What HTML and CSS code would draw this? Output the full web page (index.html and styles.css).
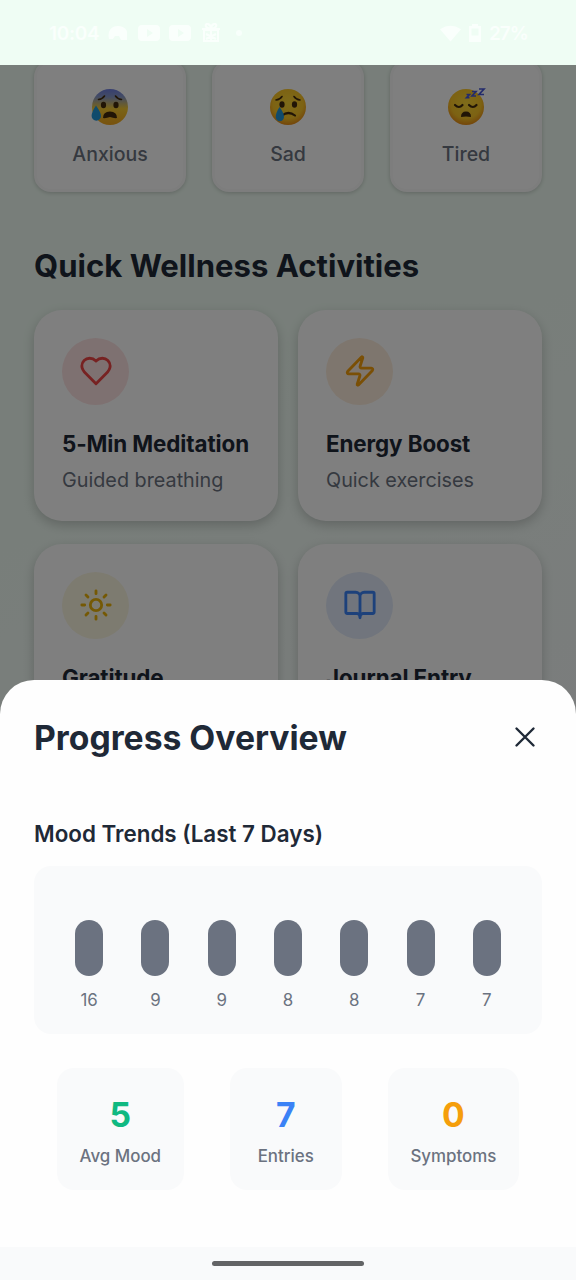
FILE: index.html
```html
<!DOCTYPE html>
<html lang="en">
<head>
    <meta charset="UTF-8">
    <meta name="viewport" content="width=device-width, initial-scale=1.0">
    <title>Wellness</title>
    <link rel="stylesheet" href="styles.css">
</head>
<body>

<div class="screen">
    <header class="status-bar">
        <div class="status-left">
            <span class="clock">10:04</span>
            <svg class="status-icon" viewBox="0 0 22 16"><path d="M2 14C0 5 5 1 11 1s10 4 9 8v6h-6l-2-4H8l-2 3z"/></svg>
            <svg class="status-icon" viewBox="0 0 22 16"><path fill-rule="evenodd" d="M4 0h14q4 0 4 4v8q0 4-4 4H4q-4 0-4-4V4q0-4 4-4zm5 4v8l6-4z"/></svg>
            <svg class="status-icon" viewBox="0 0 22 16"><path fill-rule="evenodd" d="M4 0h14q4 0 4 4v8q0 4-4 4H4q-4 0-4-4V4q0-4 4-4zm5 4v8l6-4z"/></svg>
            <svg class="status-icon gift" viewBox="0 0 20 20"><path d="M3 7h14v11H3zM1 6h18M10 6v12M10 6C3 5 4 0 7 1s3 5 3 5 0-4 3-5 4 4-3 5M5 11l10 5M15 11l-10 5"/></svg>
            <span class="status-dot"></span>
        </div>
        <div class="status-right">
            <svg class="wifi" viewBox="0 0 22 17"><path d="M0 4Q11-3 22 4L11 17z"/></svg>
            <svg class="battery" viewBox="0 0 12 18"><path fill-rule="evenodd" d="M3 2V0h6v2h3v16H0V2zM2.500 4.500v7h7v-7z"/></svg>
            <span class="percent">27%</span>
        </div>
    </header>

    <main class="page">
        <div class="moods">
            <div class="mood">
                <svg class="emoji" viewBox="0 0 40 40">
                    <defs>
                        <linearGradient id="face-cold" x1="0" y1="0" x2="0" y2="1">
                            <stop offset="0" stop-color="#6d7de0"/>
                            <stop offset=".22" stop-color="#8798c8"/>
                            <stop offset=".55" stop-color="#f5c92f"/>
                            <stop offset="1" stop-color="#f0a51e"/>
                        </linearGradient>
                        <radialGradient id="face-warm" cx=".5" cy=".4" r=".6">
                            <stop offset="0" stop-color="#fdd835"/>
                            <stop offset=".7" stop-color="#fac526"/>
                            <stop offset="1" stop-color="#e88d16"/>
                        </radialGradient>
                    </defs>
                    <circle cx="20" cy="20" r="18" fill="url(#face-cold)"/>
                    <path d="M8.500 12.500q4-.5 6-3.500M31.500 12.500q-4-.5-6-3.500" class="brow"/>
                    <ellipse cx="13.500" cy="18" rx="2.600" ry="3.200" class="dark"/>
                    <ellipse cx="26" cy="18" rx="2.600" ry="3.200" class="dark"/>
                    <path d="M13 31q0-6.500 7-6.500t7 6.500q-3 .5-7-1-4 1.500-7 1z" class="dark"/>
                    <path d="M6 18.500q5 7 5 10.500a4.700 4.700 0 0 1-9.400 0q0-4 4.400-10.500z" class="tear"/>
                </svg>
                <span>Anxious</span>
            </div>
            <div class="mood">
                <svg class="emoji" viewBox="0 0 40 40">
                    <circle cx="20" cy="20" r="18" fill="url(#face-warm)"/>
                    <path d="M8 13q4-.5 6-3.500M32 13q-4-.5-6-3.500" class="brow"/>
                    <ellipse cx="14" cy="17.500" rx="2.600" ry="3.300" class="dark"/>
                    <ellipse cx="26.500" cy="17.500" rx="2.600" ry="3.300" class="dark"/>
                    <path d="M14 28.500q6.500-5 13 0" class="mouth"/>
                    <path d="M11.500 20q4.500 6 4.500 10a4 4 0 0 1-8.300 0q0-4 3.800-10z" class="tear"/>
                </svg>
                <span>Sad</span>
            </div>
            <div class="mood">
                <svg class="emoji" viewBox="0 0 40 40">
                    <circle cx="20" cy="20" r="18" fill="url(#face-warm)"/>
                    <path d="M9 18q4 4 7.500 0M23 18q4 4 7.500 0" class="lid"/>
                    <path d="M15 30q0-5.500 5-5.500t5 5.500q-5-1.200-10 0z" class="dark"/>
                    <path d="M20.500 7.500h3l-3 3.200h3M26 4.500h4l-4 4.500h4M33 2h5l-5 5.500h5" class="snore"/>
                </svg>
                <span>Tired</span>
            </div>
        </div>

        <h2 class="section-title">Quick Wellness Activities</h2>

        <div class="activities">
            <div class="activity">
                <div class="badge red">
                    <svg viewBox="0 0 24 24"><path d="M19 14c1.490-1.460 3-3.210 3-5.500A5.500 5.500 0 0 0 16.500 3c-1.760 0-3 .5-4.500 2-1.500-1.500-2.740-2-4.500-2A5.500 5.500 0 0 0 2 8.500c0 2.300 1.500 4.050 3 5.500l7 7Z"/></svg>
                </div>
                <h3>5-Min Meditation</h3>
                <p>Guided breathing</p>
            </div>
            <div class="activity">
                <div class="badge orange">
                    <svg viewBox="0 0 24 24"><path d="M4 14a1 1 0 0 1-.78-1.630l9.900-10.200a.5.5 0 0 1 .86.460l-1.920 6.020A1 1 0 0 0 13 10h7a1 1 0 0 1 .78 1.630l-9.900 10.200a.5.5 0 0 1-.86-.460l1.920-6.020A1 1 0 0 0 11 14z"/></svg>
                </div>
                <h3>Energy Boost</h3>
                <p>Quick exercises</p>
            </div>
            <div class="activity">
                <div class="badge yellow">
                    <svg viewBox="0 0 24 24"><circle cx="12" cy="12" r="4"/><path d="M12 2v2M12 20v2M4.930 4.930l1.410 1.410M17.660 17.660l1.410 1.410M2 12h2M20 12h2M6.340 17.660l-1.410 1.410M19.070 4.930l-1.410 1.410"/></svg>
                </div>
                <h3>Gratitude</h3>
            </div>
            <div class="activity">
                <div class="badge blue">
                    <svg viewBox="0 0 24 24"><path d="M12 6v15M3 18a1 1 0 0 1-1-1V4a1 1 0 0 1 1-1h6a3 3 0 0 1 3 3 3 3 0 0 1 3-3h6a1 1 0 0 1 1 1v13a1 1 0 0 1-1 1h-7a2 3 0 0 0-2 3 2 3 0 0 0-2-3z"/></svg>
                </div>
                <h3>Journal Entry</h3>
            </div>
        </div>
    </main>

    <div class="overlay">
        <section class="sheet">
            <div class="sheet-header">
                <h1>Progress Overview</h1>
                <button class="close" aria-label="Close">
                    <svg viewBox="0 0 24 24"><path d="M18 6 6 18M6 6l12 12"/></svg>
                </button>
            </div>

            <h4 class="chart-title">Mood Trends (Last 7 Days)</h4>
            <div class="chart">
                <div class="day"><div class="bar"></div><span>16</span></div>
                <div class="day"><div class="bar"></div><span>9</span></div>
                <div class="day"><div class="bar"></div><span>9</span></div>
                <div class="day"><div class="bar"></div><span>8</span></div>
                <div class="day"><div class="bar"></div><span>8</span></div>
                <div class="day"><div class="bar"></div><span>7</span></div>
                <div class="day"><div class="bar"></div><span>7</span></div>
            </div>

            <div class="stats">
                <div class="stat"><strong class="green-text">5</strong><span>Avg Mood</span></div>
                <div class="stat"><strong class="blue-text">7</strong><span>Entries</span></div>
                <div class="stat"><strong class="orange-text">0</strong><span>Symptoms</span></div>
            </div>
        </section>
        <div class="nav-bar"><div class="nav-handle"></div></div>
    </div>
</div>

</body>
</html>
```
FILE: styles.css
```css
* {
    box-sizing: border-box;
}
body {
    margin: 0;
    font-family: Inter, sans-serif;
    color: #1f2937;
}
h1, h2, h3, h4, p {
    margin: 0;
}
.screen {
    position: relative;
    display: flex;
    flex-direction: column;
    width: 576px;
    height: 1280px;
    overflow: hidden;
    background: linear-gradient(155deg, #f0fdf4 30%, #f8fafc 75%);
}

/* status bar */
.status-bar {
    display: flex;
    flex: none;
    justify-content: space-between;
    align-items: center;
    height: 65px;
    padding: 1px 49px 0;
    background-color: #effdf4;
    color: #fafffc;
    fill: #fafffc;
    font-size: 19px;
    font-weight: 600;
}
.status-left,
.status-right {
    display: flex;
    align-items: center;
}
.status-left {
    gap: 9px;
}
.clock {
    width: 49px;
    letter-spacing: -0.3px;
}
.status-right {
    gap: 8px;
}
.percent {
    width: 38px;
    letter-spacing: -1px;
}
.status-icon {
    width: 22px;
    height: 16px;
}
.gift {
    height: 20px;
    fill: none;
    stroke: #fafffc;
    stroke-width: 2;
}
.status-dot {
    width: 6px;
    height: 6px;
    margin-left: 5px;
    border-radius: 50%;
    background-color: #f8fffb;
}
.wifi {
    width: 21px;
    height: 17px;
}
.battery {
    width: 12px;
    height: 18px;
}

/* page behind the sheet */
.page {
    flex: 1;
    min-height: 0;
    padding: 0 34px;
    overflow: hidden;
}
.moods {
    display: flex;
    justify-content: space-between;
    margin-top: -5px;
}
.mood {
    display: flex;
    flex-direction: column;
    align-items: center;
    width: 152px;
    height: 132px;
    padding-top: 24px;
    border: 3px solid #fafbfa;
    border-radius: 17px;
    background-color: #fff;
    box-shadow: 0 1px 4px rgba(0, 0, 0, 0.2);
    color: #6b7280;
    font-size: 19.5px;
    font-weight: 500;
    line-height: 28px;
}
.emoji {
    width: 40px;
    height: 40px;
    margin-bottom: 13px;
}
.brow,
.lid,
.mouth {
    fill: none;
    stroke: #422b0d;
    stroke-width: 1.6;
    stroke-linecap: round;
}
.lid,
.mouth {
    stroke-width: 2.2;
}
.dark {
    fill: #422b0d;
}
.tear {
    fill: #2196d9;
}
.snore {
    fill: none;
    stroke: #4757d8;
    stroke-width: 1.7;
}
.section-title {
    margin-top: 55px;
    font-size: 31.1px;
    font-weight: 700;
    line-height: 38px;
}
.activities {
    display: grid;
    grid-template-columns: 244px 244px;
    column-gap: 20px;
    row-gap: 23px;
    margin-top: 24.5px;
}
.activity {
    height: 211px;
    padding: 28px;
    border-radius: 28px;
    background-color: #fff;
    box-shadow: 0 4px 12px rgba(0, 0, 0, 0.2);
    white-space: nowrap;
}
.activity h3 {
    margin-top: 25px;
    font-size: 22.4px;
    font-weight: 700;
    letter-spacing: -0.1px;
    line-height: 28px;
}
.activity p {
    margin-top: 8px;
    color: #6b7280;
    font-size: 19.8px;
    line-height: 28px;
}
.badge {
    display: flex;
    align-items: center;
    justify-content: center;
    width: 67px;
    height: 67px;
    border-radius: 50%;
}
.badge svg,
.close svg {
    width: 34px;
    height: 34px;
    fill: none;
    stroke: currentColor;
    stroke-width: 2;
    stroke-linecap: round;
    stroke-linejoin: round;
}
.red {
    background-color: #fde3e3;
    color: #ef4444;
}
.orange {
    background-color: #fdeddc;
    color: #f59e0b;
}
.yellow {
    background-color: #fbf6e1;
    color: #eab308;
}
.blue {
    background-color: #e2ebfa;
    color: #3b82f6;
}

/* bottom sheet */
.overlay {
    position: absolute;
    top: 65px;
    right: 0;
    bottom: 0;
    left: 0;
    display: flex;
    flex-direction: column;
    justify-content: flex-end;
    background-color: rgba(0, 0, 0, 0.5);
}
.sheet {
    height: 567px;
    padding: 33px 34px 0;
    border-radius: 34px 34px 0 0;
    background-color: #fefefe;
}
.sheet-header {
    display: flex;
    justify-content: space-between;
    align-items: center;
    height: 48px;
}
.sheet-header h1 {
    font-size: 33.7px;
    font-weight: 700;
}
.close {
    display: flex;
    padding: 0;
    border: none;
    background: none;
    color: #1f2937;
    cursor: pointer;
}
.close svg {
    stroke-width: 1.7;
}
.chart-title {
    margin-top: 59px;
    font-size: 22.4px;
    font-weight: 600;
    line-height: 28px;
}
.chart {
    display: flex;
    justify-content: space-around;
    align-items: flex-end;
    height: 168px;
    margin-top: 18px;
    padding: 22px;
    border-radius: 17px;
    background-color: #f9fafb;
}
.day {
    display: flex;
    flex: 1;
    flex-direction: column;
    align-items: center;
    color: #6b7280;
    font-size: 16.9px;
    line-height: 24px;
}
.bar {
    width: 28px;
    height: 56px;
    margin-bottom: 12px;
    border-radius: 14px;
    background-color: #6b7280;
}
.stats {
    display: flex;
    justify-content: space-around;
    margin-top: 34px;
}
.stat {
    display: flex;
    flex-direction: column;
    align-items: center;
    min-width: 112px;
    height: 122px;
    padding: 23px 22.5px;
    border-radius: 17px;
    background-color: #f9fafb;
}
.stat strong {
    font-size: 33.7px;
    font-weight: 700;
    line-height: 48px;
}
.stat span {
    margin-top: 5px;
    color: #6b7280;
    font-size: 16.9px;
    font-weight: 500;
    line-height: 24px;
}
.green-text {
    color: #10b981;
}
.blue-text {
    color: #3b82f6;
}
.orange-text {
    color: #f59e0b;
}
.nav-bar {
    display: flex;
    justify-content: center;
    height: 33px;
    padding-top: 14px;
    background-color: #f9fafb;
}
.nav-handle {
    width: 152px;
    height: 5px;
    border-radius: 3px;
    background-color: #636466;
}
```
